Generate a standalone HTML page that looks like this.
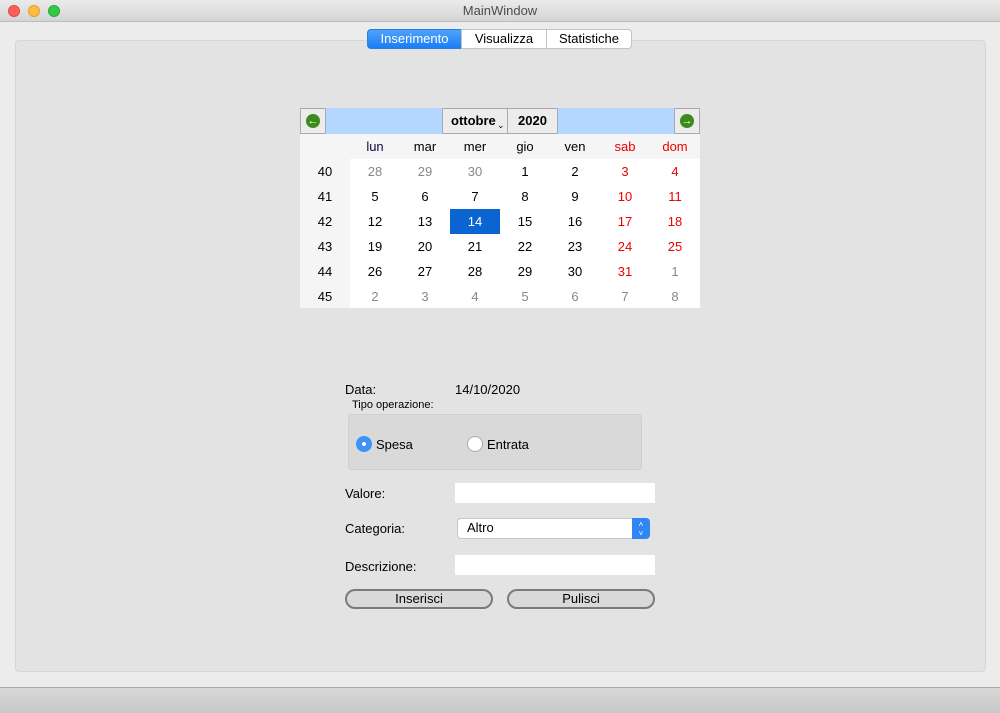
<!DOCTYPE html><html><head><style>
*{box-sizing:border-box;margin:0;padding:0}
body{width:1000px;height:713px;background:#ececec;font-family:"Liberation Sans",sans-serif;font-size:13px;color:#000;position:relative;overflow:hidden}
.a{position:absolute}
.tb{left:0;top:0;width:1000px;height:22px;background:linear-gradient(#ebebeb,#d5d5d5);border-bottom:1px solid #bdbdbd;text-align:center;line-height:22px;color:#4d4d4d}
.dot{width:12px;height:12px;border-radius:6px;top:5px}
.panel{left:15px;top:40px;width:971px;height:632px;background:#e3e3e3;border:1px solid #d6d6d6;border-radius:4px}
.tab{top:29px;height:20px;line-height:18px;text-align:center;background:#fff;border:1px solid #c3c3c3}
.cal{left:300px;top:108px;width:400px;height:200px;background:#fff}
.c{position:absolute;width:50px;height:25px;line-height:25px;text-align:center}
.g{color:#888}.r{color:#e00}.rg{color:#888}
.btn{top:589px;height:20px;border:2px solid #7a7a7a;border-radius:10px;background:#d9d9d9;text-align:center;line-height:16px}
.inp{background:#fff;height:20px;left:455px;width:200px}
</style></head><body>
<div class="a tb">MainWindow</div>
<div class="a dot" style="left:8px;background:#fc605c;border:1px solid #de4a45"></div>
<div class="a dot" style="left:28px;background:#fdbc40;border:1px solid #dea035"></div>
<div class="a dot" style="left:48px;background:#34c84a;border:1px solid #27a93a"></div>
<div class="a panel"></div>
<div class="a tab" style="left:367px;width:95px;background:linear-gradient(#4fa2fb,#1a7ef5);color:#fff;border-color:#2a7ee0;border-radius:4px 0 0 4px">Inserimento</div>
<div class="a tab" style="left:461px;width:86px">Visualizza</div>
<div class="a tab" style="left:546px;width:86px;border-radius:0 4px 4px 0">Statistiche</div>
<div class="a cal">
<div class="a" style="left:0;top:0;width:400px;height:26px;background:#b3d7ff"></div>
<div class="a" style="left:0;top:26px;width:400px;height:25px;background:#f5f5f5"></div>
<div class="a" style="left:0;top:26px;width:50px;height:174px;background:#f5f5f5"></div>
<div class="a" style="left:0;top:0;width:26px;height:26px;background:#ececec;border:1px solid #aaa"><div class="a" style="left:5px;top:5px;width:14px;height:14px;border-radius:7px;background:#3d8a1e;color:#fff;font-size:11px;line-height:14px;text-align:center;font-weight:bold">&#8592;</div></div>
<div class="a" style="left:374px;top:0;width:26px;height:26px;background:#ececec;border:1px solid #aaa"><div class="a" style="left:5px;top:5px;width:14px;height:14px;border-radius:7px;background:#3d8a1e;color:#fff;font-size:11px;line-height:14px;text-align:center;font-weight:bold">&#8594;</div></div>
<div class="a" style="left:142px;top:0;width:66px;height:26px;background:#ececec;border:1px solid #aaa;font-weight:bold;line-height:24px;padding-left:8px">ottobre<span style="position:absolute;left:54px;top:4px;font-size:9px;font-weight:normal">&#8964;</span></div>
<div class="a" style="left:207px;top:0;width:51px;height:26px;background:#ececec;border:1px solid #aaa;font-weight:bold;line-height:24px;text-align:center">2020</div>
<div class="c" style="left:50px;top:26px;color:#0a0a40">lun</div><div class="c" style="left:100px;top:26px">mar</div><div class="c" style="left:150px;top:26px">mer</div><div class="c" style="left:200px;top:26px">gio</div><div class="c" style="left:250px;top:26px">ven</div><div class="c r" style="left:300px;top:26px">sab</div><div class="c r" style="left:350px;top:26px">dom</div>
<div class="c" style="left:0;top:51px">40</div><div class="c" style="left:0;top:76px">41</div><div class="c" style="left:0;top:101px">42</div><div class="c" style="left:0;top:126px">43</div><div class="c" style="left:0;top:151px">44</div><div class="c" style="left:0;top:176px">45</div>
<div class="c g" style="left:50px;top:51px">28</div><div class="c g" style="left:100px;top:51px">29</div><div class="c g" style="left:150px;top:51px">30</div><div class="c" style="left:200px;top:51px">1</div><div class="c" style="left:250px;top:51px">2</div><div class="c r" style="left:300px;top:51px">3</div><div class="c r" style="left:350px;top:51px">4</div>
<div class="c" style="left:50px;top:76px">5</div><div class="c" style="left:100px;top:76px">6</div><div class="c" style="left:150px;top:76px">7</div><div class="c" style="left:200px;top:76px">8</div><div class="c" style="left:250px;top:76px">9</div><div class="c r" style="left:300px;top:76px">10</div><div class="c r" style="left:350px;top:76px">11</div>
<div class="c" style="left:50px;top:101px">12</div><div class="c" style="left:100px;top:101px">13</div><div class="c" style="left:150px;top:101px;background:#0a64d2;color:#fff">14</div><div class="c" style="left:200px;top:101px">15</div><div class="c" style="left:250px;top:101px">16</div><div class="c r" style="left:300px;top:101px">17</div><div class="c r" style="left:350px;top:101px">18</div>
<div class="c" style="left:50px;top:126px">19</div><div class="c" style="left:100px;top:126px">20</div><div class="c" style="left:150px;top:126px">21</div><div class="c" style="left:200px;top:126px">22</div><div class="c" style="left:250px;top:126px">23</div><div class="c r" style="left:300px;top:126px">24</div><div class="c r" style="left:350px;top:126px">25</div>
<div class="c" style="left:50px;top:151px">26</div><div class="c" style="left:100px;top:151px">27</div><div class="c" style="left:150px;top:151px">28</div><div class="c" style="left:200px;top:151px">29</div><div class="c" style="left:250px;top:151px">30</div><div class="c r" style="left:300px;top:151px">31</div><div class="c g" style="left:350px;top:151px">1</div>
<div class="c g" style="left:50px;top:176px">2</div><div class="c g" style="left:100px;top:176px">3</div><div class="c g" style="left:150px;top:176px">4</div><div class="c g" style="left:200px;top:176px">5</div><div class="c g" style="left:250px;top:176px">6</div><div class="c g" style="left:300px;top:176px">7</div><div class="c g" style="left:350px;top:176px">8</div>
</div>
<div class="a" style="left:345px;top:382px">Data:</div>
<div class="a" style="left:455px;top:382px">14/10/2020</div>
<div class="a" style="left:352px;top:399px;font-size:11px">Tipo operazione:</div>
<div class="a" style="left:348px;top:414px;width:294px;height:56px;background:#d9d9d9;border:1px solid #d0d0d0;border-radius:3px"></div>
<div class="a" style="left:356px;top:436px;width:16px;height:16px;border-radius:8px;background:#3d92f5"><div class="a" style="left:6px;top:6px;width:4px;height:4px;border-radius:2px;background:#fff"></div></div>
<div class="a" style="left:376px;top:437px">Spesa</div>
<div class="a" style="left:467px;top:436px;width:16px;height:16px;border-radius:8px;background:#fff;border:1px solid #aaa"></div>
<div class="a" style="left:487px;top:437px">Entrata</div>
<div class="a" style="left:345px;top:486px">Valore:</div>
<div class="a inp" style="top:483px"></div>
<div class="a" style="left:345px;top:521px">Categoria:</div>
<div class="a" style="left:457px;top:518px;width:193px;height:21px;background:#fff;border:1px solid #c8c8c8;border-radius:4px;padding-left:9px;line-height:18px">Altro</div>
<div class="a" style="left:632px;top:518px;width:18px;height:21px;background:#2f86f4;border-radius:0 4px 4px 0;color:#fff;font-size:8px;line-height:9px;text-align:center;padding-top:2px">&#708;<br>&#709;</div>
<div class="a" style="left:345px;top:559px">Descrizione:</div>
<div class="a inp" style="top:555px"></div>
<div class="a btn" style="left:345px;width:148px">Inserisci</div>
<div class="a btn" style="left:507px;width:148px">Pulisci</div>
<div class="a" style="left:0;top:687px;width:1000px;height:26px;background:linear-gradient(#d8d8d8,#c8c8c8);border-top:1px solid #aaa"></div>
</body></html>
